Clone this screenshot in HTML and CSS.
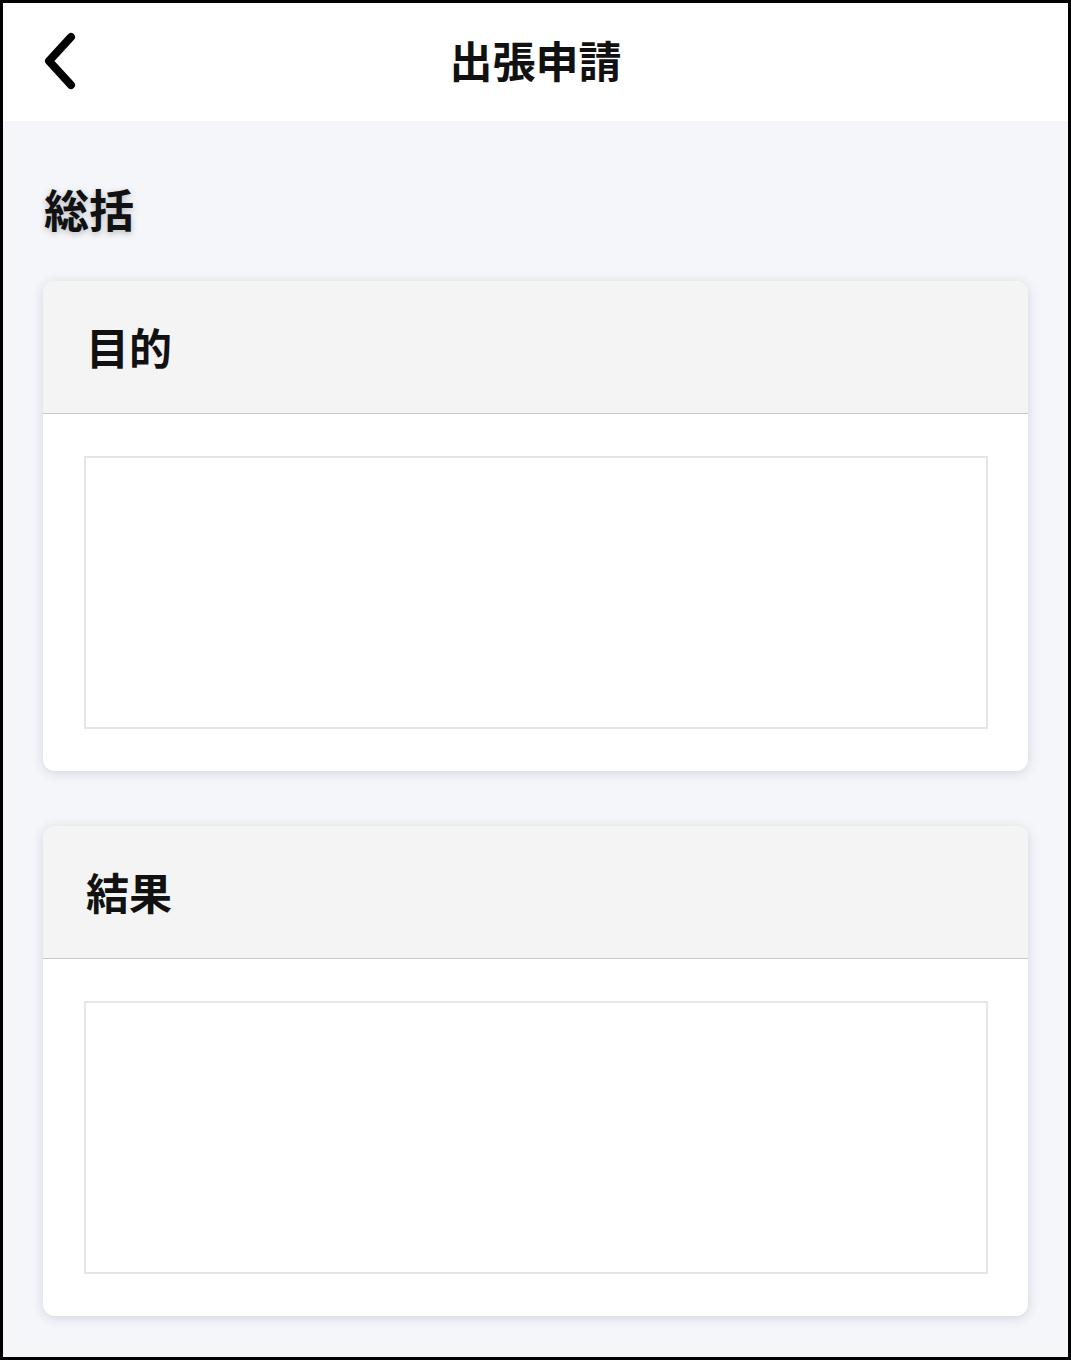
FILE: index.html
```html
<!DOCTYPE html>
<html lang="ja">
<head>
  <meta charset="UTF-8" />
  <meta name="viewport" content="width=device-width, initial-scale=1.0"/>
  <title>出張申請</title>
  <link rel="stylesheet" href="styles.css">
</head>
<body>
  <div class="screen">
    <header class="top-bar">
      <button class="back-button" aria-label="戻る">
        <svg width="34" height="58" viewBox="0 0 34 58">
          <polyline points="28,5 6,29 28,53" fill="none" stroke="#000" stroke-width="8" stroke-linecap="round" stroke-linejoin="round"/>
        </svg>
      </button>
      <h1>出張申請</h1>
    </header>

    <main class="content">
      <h2 class="section-title">総括</h2>

      <div class="card">
        <div class="card-header">目的</div>
        <div class="card-body">
          <textarea class="field"></textarea>
        </div>
      </div>

      <div class="card">
        <div class="card-header">結果</div>
        <div class="card-body">
          <textarea class="field"></textarea>
        </div>
      </div>
    </main>
  </div>
</body>
</html>
```

FILE: styles.css
```css
body {
  margin: 0;
  font-family: "Noto Sans CJK JP", "Noto Sans", sans-serif;
  background: #000;
}

.screen {
  width: 1071px;
  height: 1360px;
  box-sizing: border-box;
  border: 3px solid #000;
  background: #f5f6fa;
  overflow: hidden;
}

.top-bar {
  position: relative;
  height: 118px;
  box-sizing: border-box;
  padding-bottom: 7px;
  background: #fff;
  display: flex;
  align-items: center;
  justify-content: center;
}

.top-bar h1 {
  margin: 0;
  font-size: 43px;
  font-weight: 700;
  color: #111;
}

.back-button {
  position: absolute;
  left: 40px;
  top: 29px;
  padding: 0;
  border: none;
  background: none;
  cursor: pointer;
}

.back-button svg {
  display: block;
}

.content {
  padding: 58px 40px 0;
}

.section-title {
  margin: 0 0 42px 1px;
  font-size: 45px;
  font-weight: 700;
  line-height: 60px;
  color: #111;
  text-shadow: 0 2px 6px rgba(0, 0, 0, 0.25);
}

.card {
  background: #fff;
  border-radius: 12px;
  box-shadow: 0 2px 12px rgba(40, 45, 70, 0.16);
  overflow: hidden;
  margin-bottom: 55px;
}

.card-header {
  height: 133px;
  box-sizing: border-box;
  padding: 0 0 2px 43px;
  display: flex;
  align-items: center;
  background: #f4f4f4;
  border-bottom: 1px solid #c9c9c9;
  font-size: 43px;
  font-weight: 700;
  color: #111;
}

.card-body {
  padding: 42px 40px 42px 41px;
}

.field {
  display: block;
  width: 100%;
  height: 273px;
  box-sizing: border-box;
  border: 2px solid #e6e6e8;
  border-radius: 0;
  resize: none;
  background: #fff;
  font-family: inherit;
}
```
